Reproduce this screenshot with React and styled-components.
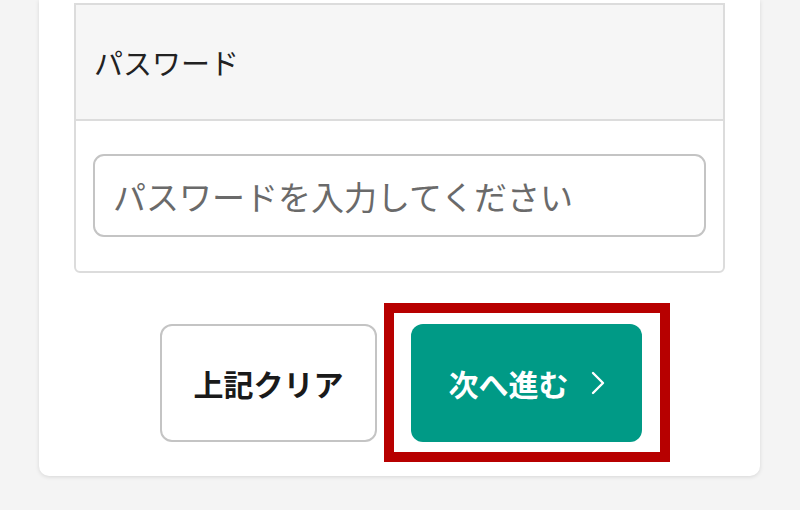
import React from "react";
import styled, { createGlobalStyle } from "styled-components";

const GlobalStyle = createGlobalStyle`
  html, body {
    margin: 0;
    padding: 0;
    background: #f4f4f4;
    font-family: "Noto Sans CJK JP", "Noto Sans", sans-serif;
  }
`

const Page = styled.div`
  width: 800px;
  min-height: 510px;
  padding: 0 40px 0 39px;
  box-sizing: border-box;
  background: #f4f4f4;
`

const Card = styled.div`
  background: #fff;
  border-radius: 0 0 10px 10px;
  box-shadow: 0 1px 4px rgba(0, 0, 0, 0.12);
  padding: 3px 35px 34px 35px;
`

const Table = styled.div`
  border: 2px solid #dcdcdc;
  border-radius: 0 0 6px 6px;
`

const HeadRow = styled.div`
  height: 114px;
  background: #f6f6f6;
  border-bottom: 2px solid #dcdcdc;
  display: flex;
  align-items: center;
  padding: 0 18px;
  font-size: 29px;
  color: #222;
`

const BodyRow = styled.div`
  padding: 33px 17px 34px 17px;
`

const Input = styled.input`
  width: 100%;
  box-sizing: border-box;
  height: 83px;
  border: 2px solid #c4c4c4;
  border-radius: 11px;
  padding: 0 18px;
  font-family: inherit;
  font-size: 33px;
  color: #222;
  outline: none;
  &::placeholder {
    color: #6a6a6a;
  }
`

const ButtonRow = styled.div`
  display: flex;
  justify-content: center;
  gap: 34px;
  margin-top: 51px;
  padding-left: 3px;
`

const Button = styled.button`
  height: 118px;
  width: ${(p) => p.w}px;
  border-radius: 12px;
  font-family: inherit;
  font-size: 30px;
  font-weight: 700;
  display: flex;
  align-items: center;
  justify-content: center;
  gap: 22px;
  padding: 0 0 0 ${(p) => (p.primary ? 0 : 0)}px;
  cursor: pointer;
  border: ${(p) => (p.primary ? "none" : "2px solid #c4c4c4")};
  background: ${(p) => (p.primary ? "#009a86" : "#fff")};
  color: ${(p) => (p.primary ? "#fff" : "#1a1a1a")};
`

const Highlight = styled.div`
  position: relative;
  &::after {
    content: "";
    position: absolute;
    top: -21px;
    bottom: -20px;
    left: -27px;
    right: -28px;
    border: 10px solid #b70000;
    pointer-events: none;
  }
`

const Chevron = () => (
  <svg width="14" height="24" viewBox="0 0 14 24">
    <polyline points="2,2 12,12 2,22" fill="none" stroke="#fff" strokeWidth="2.4" strokeLinecap="round" strokeLinejoin="round" />
  </svg>
)

export default function App() {
  return (
    <Page>
      <GlobalStyle />
      <Card>
        <Table>
          <HeadRow>パスワード</HeadRow>
          <BodyRow>
            <Input type="password" placeholder="パスワードを入力してください" />
          </BodyRow>
        </Table>
        <ButtonRow>
          <Button w={217}>上記クリア</Button>
          <Highlight>
            <Button primary w={231}>
              次へ進む
              <Chevron />
            </Button>
          </Highlight>
        </ButtonRow>
      </Card>
    </Page>
  )
}
